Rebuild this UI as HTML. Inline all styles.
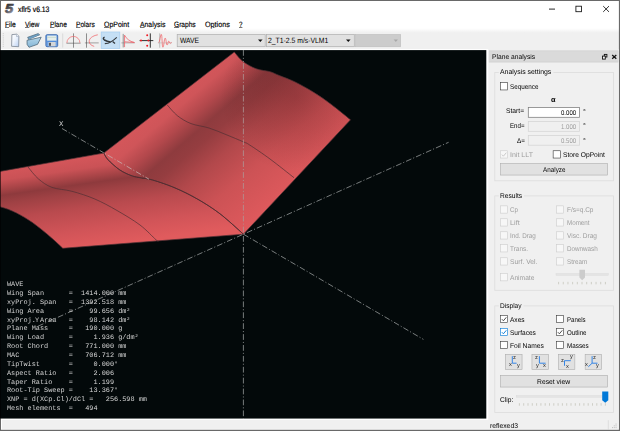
<!DOCTYPE html>
<html lang="en">
<head>
<meta charset="utf-8">
<title>xflr5 v6.13</title>
<style>
html,body{margin:0;padding:0;background:#fff;}
body{width:620px;height:431px;overflow:hidden;position:relative;font-family:"Liberation Sans",sans-serif;}
#win{position:absolute;left:0;top:0;width:620px;height:431px;overflow:hidden;background:#fff;}
svg{position:absolute;left:0;top:0;}
.t{position:absolute;white-space:pre;line-height:10px;height:10px;transform-origin:0 50%;transform:rotate(0.03deg);font-family:"Liberation Sans",sans-serif;}
.t u{text-decoration:underline;text-decoration-thickness:0.5px;text-underline-offset:0.4px;text-decoration-color:#777;}
.m{position:absolute;left:6.9px;margin:0;transform-origin:0 50%;transform:rotate(0.03deg);font-family:"Liberation Mono",monospace;font-size:6.87px;line-height:10px;height:10px;color:#d4d4d4;white-space:pre;}
#xl{position:absolute;left:58.6px;top:118.7px;font-family:"Liberation Mono",monospace;font-size:7.4px;line-height:10px;height:10px;color:#d0d0d0;transform-origin:0 50%;transform:rotate(0.03deg);}
#gl,#pt{position:absolute;left:0;top:0;width:620px;height:431px;filter:grayscale(1);}
#frame{position:absolute;left:0;top:0;width:620px;height:431px;pointer-events:none;}
</style>
</head>
<body>
<div id="win">
<svg id="view" width="620" height="431" viewBox="0 0 620 431">
<defs>
<clipPath id="vc"><rect x="0" y="50.10" width="486.55" height="368.65"/></clipPath>
<linearGradient id="gup" gradientUnits="userSpaceOnUse" x1="169.0" y1="102.0" x2="266.5" y2="216.0"><stop offset="0.000" stop-color="#d3565a"/><stop offset="0.070" stop-color="#cf5559"/><stop offset="0.170" stop-color="#b3484c"/><stop offset="0.270" stop-color="#8e3b3e"/><stop offset="0.350" stop-color="#953d40"/><stop offset="0.500" stop-color="#b2484b"/><stop offset="0.700" stop-color="#cc5255"/><stop offset="1.000" stop-color="#e05a5d"/></linearGradient>
<linearGradient id="glo" gradientUnits="userSpaceOnUse" x1="52.0" y1="162.0" x2="64.6" y2="251.1"><stop offset="0.000" stop-color="#d4565a"/><stop offset="0.120" stop-color="#ca5256"/><stop offset="0.220" stop-color="#a84447"/><stop offset="0.290" stop-color="#8e3a3d"/><stop offset="0.380" stop-color="#9f4144"/><stop offset="0.550" stop-color="#b94a4e"/><stop offset="0.800" stop-color="#d15458"/><stop offset="1.000" stop-color="#e05b5d"/></linearGradient>
<radialGradient id="gtip" gradientUnits="userSpaceOnUse" cx="296" cy="96" r="76"><stop offset="0" stop-color="#3a0a0e" stop-opacity="0.24"/><stop offset="0.5" stop-color="#3a0a0e" stop-opacity="0.13"/><stop offset="1" stop-color="#3a0a0e" stop-opacity="0"/></radialGradient>
</defs>
<g clip-path="url(#vc)">
<rect x="0" y="50.10" width="486.55" height="368.65" fill="#03090a"/>
<path d="M103.80,153.10 L234.30,52.00 C235.75,53.58 239.32,58.70 243.00,61.50 C246.68,64.30 251.90,67.10 256.40,68.80 C260.90,70.50 266.18,70.58 270.00,71.70 C273.82,72.82 275.13,73.80 279.30,75.50 C283.47,77.20 289.35,79.15 295.00,81.90 C300.65,84.65 307.15,88.25 313.20,92.00 C319.25,95.75 325.08,99.77 331.30,104.40 C337.52,109.03 347.30,117.23 350.50,119.80 L243.40,234.20 C239.50,230.80 227.62,219.63 220.00,213.80 C212.38,207.97 205.20,203.52 197.70,199.20 C190.20,194.88 182.52,191.10 175.00,187.90 C167.48,184.70 158.43,181.70 152.60,180.00 C146.77,178.30 143.60,178.45 140.00,177.70 C136.40,176.95 134.40,176.82 131.00,175.50 C127.60,174.18 123.43,172.43 119.60,169.80 C115.77,167.17 110.63,162.48 108.00,159.70 C105.37,156.92 104.50,154.20 103.80,153.10 Z" fill="url(#gup)"/>
<path d="M103.80,153.10 L234.30,52.00 C235.75,53.58 239.32,58.70 243.00,61.50 C246.68,64.30 251.90,67.10 256.40,68.80 C260.90,70.50 266.18,70.58 270.00,71.70 C273.82,72.82 275.13,73.80 279.30,75.50 C283.47,77.20 289.35,79.15 295.00,81.90 C300.65,84.65 307.15,88.25 313.20,92.00 C319.25,95.75 325.08,99.77 331.30,104.40 C337.52,109.03 347.30,117.23 350.50,119.80 L243.40,234.20 C239.50,230.80 227.62,219.63 220.00,213.80 C212.38,207.97 205.20,203.52 197.70,199.20 C190.20,194.88 182.52,191.10 175.00,187.90 C167.48,184.70 158.43,181.70 152.60,180.00 C146.77,178.30 143.60,178.45 140.00,177.70 C136.40,176.95 134.40,176.82 131.00,175.50 C127.60,174.18 123.43,172.43 119.60,169.80 C115.77,167.17 110.63,162.48 108.00,159.70 C105.37,156.92 104.50,154.20 103.80,153.10 Z" fill="url(#gtip)"/>
<path d="M103.80,153.10 L-9.00,173.00 L-9,204.4 L0,206.8 C22.5,212.4 43.2,229.6 62.8,248.3 L243.40,234.20 C239.50,230.80 227.62,219.63 220.00,213.80 C212.38,207.97 205.20,203.52 197.70,199.20 C190.20,194.88 182.52,191.10 175.00,187.90 C167.48,184.70 158.43,181.70 152.60,180.00 C146.77,178.30 143.60,178.45 140.00,177.70 C136.40,176.95 134.40,176.82 131.00,175.50 C127.60,174.18 123.43,172.43 119.60,169.80 C115.77,167.17 110.63,162.48 108.00,159.70 C105.37,156.92 104.50,154.20 103.80,153.10 Z" fill="url(#glo)"/>
<path d="M103.80,153.10 L234.30,52.00 C235.75,53.58 239.32,58.70 243.00,61.50 C246.68,64.30 251.90,67.10 256.40,68.80 C260.90,70.50 266.18,70.58 270.00,71.70 C273.82,72.82 275.13,73.80 279.30,75.50 C283.47,77.20 289.35,79.15 295.00,81.90 C300.65,84.65 307.15,88.25 313.20,92.00 C319.25,95.75 325.08,99.77 331.30,104.40 C337.52,109.03 347.30,117.23 350.50,119.80 L243.40,234.20 C239.50,230.80 227.62,219.63 220.00,213.80 C212.38,207.97 205.20,203.52 197.70,199.20 C190.20,194.88 182.52,191.10 175.00,187.90 C167.48,184.70 158.43,181.70 152.60,180.00 C146.77,178.30 143.60,178.45 140.00,177.70 C136.40,176.95 134.40,176.82 131.00,175.50 C127.60,174.18 123.43,172.43 119.60,169.80 C115.77,167.17 110.63,162.48 108.00,159.70 C105.37,156.92 104.50,154.20 103.80,153.10 Z" stroke="#502f33" stroke-width="0.7" fill="none"/>
<path d="M103.80,153.10 L-9.00,173.00 L-9,204.4 L0,206.8 C22.5,212.4 43.2,229.6 62.8,248.3 L243.40,234.20 C239.50,230.80 227.62,219.63 220.00,213.80 C212.38,207.97 205.20,203.52 197.70,199.20 C190.20,194.88 182.52,191.10 175.00,187.90 C167.48,184.70 158.43,181.70 152.60,180.00 C146.77,178.30 143.60,178.45 140.00,177.70 C136.40,176.95 134.40,176.82 131.00,175.50 C127.60,174.18 123.43,172.43 119.60,169.80 C115.77,167.17 110.63,162.48 108.00,159.70 C105.37,156.92 104.50,154.20 103.80,153.10 Z" stroke="#502f33" stroke-width="0.7" fill="none"/>
<path d="M167.20,104.90 C168.90,106.70 173.43,112.58 177.40,115.70 C181.37,118.82 185.73,121.55 191.00,123.60 C196.27,125.65 203.00,126.10 209.00,128.00 C215.00,129.90 221.33,132.72 227.00,135.00 C232.67,137.28 239.22,140.03 243.00,141.70 C246.78,143.37 245.20,142.12 249.70,145.00 C254.20,147.88 262.62,153.55 270.00,159.00 C277.38,164.45 290.00,174.58 294.00,177.70" stroke="#502f33" stroke-width="0.7" fill="none"/>
<path d="M28.00,167.00 C29.73,168.98 34.40,175.50 38.40,178.90 C42.40,182.30 46.40,185.33 52.00,187.40 C57.60,189.47 64.87,189.37 72.00,191.30 C79.13,193.23 87.30,195.80 94.80,199.00 C102.30,202.20 109.47,206.17 117.00,210.50 C124.53,214.83 133.50,220.12 140.00,225.00 C146.50,229.88 152.92,237.10 156.00,239.80 C159.08,242.50 158.08,240.97 158.50,241.20" stroke="#502f33" stroke-width="0.7" fill="none"/>
<line x1="62.0" y1="128.5" x2="103.8" y2="152.85" stroke="#969999" stroke-width="0.8" stroke-dasharray="5.8 2.0 1.1 2.0" fill="none"/>
<line x1="103.8" y1="152.85" x2="149.0" y2="179.2" stroke="#c6aeae" stroke-width="0.8" stroke-dasharray="5.8 2.0 1.1 2.0" fill="none" stroke-dashoffset="-4.6"/>
<line x1="243.4" y1="234.2" x2="423.4" y2="339.4" stroke="#969999" stroke-width="0.8" stroke-dasharray="5.8 2.0 1.1 2.0" fill="none"/>
<line x1="38" y1="326.2" x2="448.6" y2="142.3" stroke="#969999" stroke-width="0.8" stroke-dasharray="5.8 2.0 1.1 2.0" fill="none"/>
<line x1="243.4" y1="50" x2="243.4" y2="62.0" stroke="#969999" stroke-width="0.8" stroke-dasharray="5.8 2.0 1.1 2.0" fill="none"/>
<line x1="243.4" y1="62.0" x2="243.4" y2="234.2" stroke="#ae9595" stroke-width="0.8" stroke-dasharray="5.8 2.0 1.1 2.0" fill="none" stroke-dashoffset="-1.1"/>
<line x1="243.4" y1="234.2" x2="243.4" y2="419" stroke="#969999" stroke-width="0.8" stroke-dasharray="5.8 2.0 1.1 2.0" fill="none" stroke-dashoffset="-1.8"/>
</g>
</svg>
<div id="gl">
<span class="m" style="top:279.25px">WAVE</span>
<span class="m" style="top:288.09px">Wing Span      =  1414.000 mm</span>
<span class="m" style="top:296.94px">xyProj. Span   =  1392.518 mm</span>
<span class="m" style="top:305.78px">Wing Area      =    99.656 dm²</span>
<span class="m" style="top:314.62px">xyProj. Area   =    98.142 dm²</span>
<span class="m" style="top:323.47px">Plane Mass     =   190.000 g</span>
<span class="m" style="top:332.31px">Wing Load      =     1.936 g/dm²</span>
<span class="m" style="top:341.15px">Root Chord     =   771.000 mm</span>
<span class="m" style="top:349.99px">MAC            =   706.712 mm</span>
<span class="m" style="top:358.84px">TipTwist       =     0.000°</span>
<span class="m" style="top:367.68px">Aspect Ratio   =     2.006</span>
<span class="m" style="top:376.52px">Taper Ratio    =     1.199</span>
<span class="m" style="top:385.37px">Root-Tip Sweep =    13.367°</span>
<span class="m" style="top:394.21px">XNP = d(XCp.Cl)/dCl =   256.598 mm</span>
<span class="m" style="top:403.05px">Mesh elements  =   494</span>
<span class="m" style="top:314.60px;left:35.3px;color:#c4c4c4">Y</span>
<span id="xl">X</span>
</div>
<svg id="ui" width="620" height="431" viewBox="0 0 620 431">
<defs>
<linearGradient id="gdoc" x1="0" y1="0" x2="1" y2="1"><stop offset="0" stop-color="#ffffff"/><stop offset="0.45" stop-color="#eef4fd"/><stop offset="1" stop-color="#b9d0f2"/></linearGradient>
<linearGradient id="gfold" x1="0" y1="0" x2="0" y2="1"><stop offset="0" stop-color="#b4d6ea"/><stop offset="1" stop-color="#86b6d6"/></linearGradient>
<linearGradient id="gsave" x1="0" y1="0" x2="0" y2="1"><stop offset="0" stop-color="#5a8fd0"/><stop offset="1" stop-color="#2f68b4"/></linearGradient>
<linearGradient id="glogo" gradientUnits="userSpaceOnUse" x1="6" y1="4" x2="14" y2="13.5"><stop offset="0" stop-color="#2a2a2a"/><stop offset="0.5" stop-color="#5a5a62"/><stop offset="1" stop-color="#b4b4c8"/></linearGradient>
<linearGradient id="gtb" gradientUnits="userSpaceOnUse" x1="0" y1="28.2" x2="0" y2="32.8"><stop offset="0" stop-color="#ffffff"/><stop offset="1" stop-color="#f0f0f0"/></linearGradient>
</defs>
<rect x="1.00" y="28.00" width="617.90" height="5.00" fill="url(#gtb)"/>
<rect x="1.00" y="32.90" width="617.90" height="16.20" fill="#f0f0f0"/>
<rect x="2.00" y="420.00" width="616.00" height="8.90" fill="#f0f0f0"/>
<rect x="488.25" y="49.00" width="129.95" height="371.00" fill="#f0f0f0"/>
<rect x="488.90" y="50.40" width="129.30" height="12.10" fill="#d2d2d2"/>
<rect x="488.90" y="51.30" width="129.30" height="10.30" fill="#dadada"/>
<text x="5.1" y="13.5" font-family="Liberation Sans, sans-serif" font-size="13.2" font-weight="bold" font-style="italic" fill="url(#glogo)" stroke="url(#glogo)" stroke-width="0.7" stroke-linejoin="round" transform="translate(5.1 0) scale(1.13 1) translate(-5.1 0)">5</text>
<line x1="549.00" y1="9.10" x2="555.00" y2="9.10" stroke="#111" stroke-width="0.90"/>
<rect x="575.90" y="6.20" width="5.60" height="5.50" fill="none" stroke="#111" stroke-width="0.85"/>
<path d="M603.2,6.1 L609,11.9 M609,6.1 L603.2,11.9" fill="none" stroke="#111" stroke-width="0.85"/>
<rect x="2.80" y="33.30" width="0.80" height="0.80" fill="#b8b8b8"/>
<rect x="2.80" y="35.40" width="0.80" height="0.80" fill="#b8b8b8"/>
<rect x="2.80" y="37.50" width="0.80" height="0.80" fill="#b8b8b8"/>
<rect x="2.80" y="39.60" width="0.80" height="0.80" fill="#b8b8b8"/>
<rect x="2.80" y="41.70" width="0.80" height="0.80" fill="#b8b8b8"/>
<rect x="2.80" y="43.80" width="0.80" height="0.80" fill="#b8b8b8"/>
<rect x="2.80" y="45.90" width="0.80" height="0.80" fill="#b8b8b8"/>
<path d="M11.9,34.6 L16.7,34.2 L18.9,36.2 L18.7,46.7 L11.6,46.3 Z" fill="url(#gdoc)" stroke="#75808e" stroke-width="0.75"/>
<path d="M16.5,34.4 L16.5,36.6 L18.8,36.4" fill="#f4f8fd" stroke="#8a98ac" stroke-width="0.50"/>
<path d="M27.6,37.3 L38.3,33.5 L39.7,35.0 L29.0,40.0 Z" fill="#6fa0c4" stroke="#425a6c" stroke-width="0.60"/>
<path d="M28.8,39.8 L39.3,35.5 L40.1,36.6 L29.8,41.5 Z" fill="#ffffff"/>
<path d="M27.0,40.3 L41.2,37.2 L37.6,44.3 L29.0,47.3 L27.1,44.4 Z" fill="url(#gfold)" stroke="#425a6c" stroke-width="0.70"/>
<rect x="45.90" y="34.70" width="11.80" height="12.00" fill="#6ea2e4" stroke="#3a68ae" stroke-width="0.90" rx="1.20"/>
<rect x="47.20" y="35.60" width="9.20" height="5.20" fill="#e6eeea"/>
<rect x="47.20" y="36.90" width="9.20" height="0.80" fill="#c2d8cc"/>
<rect x="47.20" y="40.80" width="9.20" height="0.90" fill="#4a86d8"/>
<rect x="48.60" y="42.00" width="7.00" height="4.30" fill="#d4d6d8"/>
<rect x="49.10" y="42.80" width="1.80" height="3.00" fill="#454a52"/>
<line x1="62.70" y1="33.50" x2="62.70" y2="47.50" stroke="#d0d0d0" stroke-width="0.70"/>
<line x1="66.40" y1="43.20" x2="80.60" y2="43.20" stroke="#8a8a8a" stroke-width="0.90"/>
<line x1="73.50" y1="33.40" x2="73.50" y2="47.70" stroke="#4a4a4a" stroke-width="0.60"/>
<path d="M66.9,42.9 A6.5,6.5 0 0 1 79.9,42.9" fill="none" stroke="#f0686c" stroke-width="0.70"/>
<line x1="84.90" y1="42.90" x2="98.70" y2="42.90" stroke="#8a8a8a" stroke-width="0.80"/>
<line x1="86.50" y1="33.40" x2="86.50" y2="47.70" stroke="#4a4a4a" stroke-width="0.60"/>
<path d="M97.8,34.8 C92.2,35.8 89.2,38.6 89.2,41.3 C89.2,43.8 91.0,45.4 94.2,46.4" fill="none" stroke="#f0585c" stroke-width="0.70"/>
<rect x="101.20" y="32.00" width="18.60" height="16.60" fill="#c5dff5" stroke="#a5cdf1" stroke-width="0.70"/>
<path d="M104.6,37.2 C103.0,37.6 102.9,39.0 104.4,40.0 C106.2,41.1 108.6,41.7 110.6,41.9" fill="none" stroke="#33383d" stroke-width="1.50"/>
<path d="M110.6,41.9 C112.6,40.8 114.8,39.2 116.8,37.3" fill="none" stroke="#33383d" stroke-width="1.10"/>
<path d="M104.8,43.7 C107.0,43.5 109.0,42.9 110.6,41.9" fill="none" stroke="#3c4146" stroke-width="1.20"/>
<path d="M112.6,41.6 L115.0,43.6" fill="none" stroke="#33383d" stroke-width="1.30"/>
<line x1="121.30" y1="42.90" x2="134.80" y2="42.90" stroke="#9a9a9a" stroke-width="0.70"/>
<line x1="123.20" y1="33.90" x2="123.20" y2="47.40" stroke="#6a6a6a" stroke-width="0.70"/>
<path d="M124.55,47.1 L124.55,35.2 C126.2,38.6 129.6,41.4 134.4,42.5 C131.2,42.3 128.0,42.0 124.8,41.8" fill="none" stroke="#ee5c64" stroke-width="0.75"/>
<line x1="139.60" y1="40.60" x2="153.30" y2="40.60" stroke="#1c1c1c" stroke-width="0.90"/>
<line x1="150.30" y1="33.40" x2="150.30" y2="47.70" stroke="#1c1c1c" stroke-width="0.90"/>
<circle cx="147.2" cy="35.2" r="1.0" fill="#f01c24"/>
<circle cx="147.2" cy="45.7" r="1.0" fill="#f01c24"/>
<circle cx="141.0" cy="40.6" r="1.0" fill="#f01c24"/>
<circle cx="148.4" cy="40.6" r="1.0" fill="#f01c24"/>
<line x1="157.90" y1="42.90" x2="172.00" y2="42.90" stroke="#b8b8b8" stroke-width="0.60"/>
<line x1="159.70" y1="33.40" x2="159.70" y2="47.70" stroke="#9a9a9a" stroke-width="0.60"/>
<path d="M158.6,42.6 C159.8,42.6 160.3,34.4 161.3,34.4 C162.3,34.4 161.9,47.2 162.9,47.2 C163.9,47.2 164.2,38.1 165.2,38.1 C166.2,38.1 166.1,45.0 167.1,45.0 C168.1,45.0 167.9,41.2 168.7,41.2 C169.5,41.2 169.6,43.4 170.2,43.4 C170.8,43.4 170.9,42.4 171.6,42.4" fill="none" stroke="#f0585c" stroke-width="0.70"/>
<rect x="177.20" y="34.60" width="88.00" height="12.10" fill="#e1e1e1" stroke="#adadad" stroke-width="0.70"/>
<path d="M258.0,39.5 L262.6,39.5 L260.3,42.1 Z" fill="#111"/>
<rect x="266.40" y="34.60" width="87.90" height="12.10" fill="#e1e1e1" stroke="#adadad" stroke-width="0.70"/>
<path d="M346.0,39.5 L350.6,39.5 L348.3,42.1 Z" fill="#111"/>
<rect x="355.50" y="34.60" width="45.10" height="12.10" fill="#cccccc" stroke="#bfbfbf" stroke-width="0.70"/>
<path d="M393.7,39.6 L397.9,39.6 L395.8,41.9 Z" fill="#a8a8a8"/>
<rect x="604.30" y="54.40" width="2.60" height="2.60" fill="#dadada" stroke="#111" stroke-width="0.90"/>
<rect x="602.50" y="56.10" width="2.80" height="3.00" fill="#f4f4f4" stroke="#111" stroke-width="0.90"/>
<path d="M612.2,55.0 L616.3,58.8 M616.3,55.0 L612.2,58.8" fill="none" stroke="#111" stroke-width="1.25"/>
<rect x="494.80" y="72.40" width="118.80" height="108.40" fill="none" stroke="#dcdcdc" stroke-width="0.80"/>
<rect x="498.80" y="70.40" width="54.60" height="4.00" fill="#f0f0f0"/>
<rect x="494.80" y="195.90" width="118.80" height="94.40" fill="none" stroke="#dcdcdc" stroke-width="0.80"/>
<rect x="498.80" y="193.90" width="25.20" height="4.00" fill="#f0f0f0"/>
<rect x="494.80" y="305.90" width="118.80" height="106.60" fill="none" stroke="#dcdcdc" stroke-width="0.80"/>
<rect x="498.80" y="303.90" width="24.70" height="4.00" fill="#f0f0f0"/>
<rect x="500.35" y="82.65" width="7.30" height="7.30" fill="#ffffff" stroke="#3a3a3a" stroke-width="0.62"/>
<rect x="528.30" y="107.50" width="51.30" height="9.80" fill="#ffffff" stroke="#7a7a7a" stroke-width="0.75"/>
<rect x="528.30" y="121.50" width="51.30" height="9.80" fill="#f0f0f0" stroke="#d4d4d4" stroke-width="0.75"/>
<rect x="528.30" y="135.40" width="51.30" height="9.80" fill="#f0f0f0" stroke="#d4d4d4" stroke-width="0.75"/>
<rect x="500.35" y="150.75" width="7.30" height="7.30" fill="#f7f7f7" stroke="#cdcdcd" stroke-width="0.62"/>
<path d="M501.90,154.60 L503.40,156.20 L506.30,152.70" fill="none" stroke="#c4c4c4" stroke-width="0.90"/>
<rect x="553.15" y="150.75" width="7.30" height="7.30" fill="#ffffff" stroke="#3a3a3a" stroke-width="0.62"/>
<rect x="500.65" y="163.55" width="106.80" height="11.50" fill="#e1e1e1" stroke="#adadad" stroke-width="0.60"/>
<rect x="500.35" y="205.85" width="7.30" height="7.30" fill="#f7f7f7" stroke="#cdcdcd" stroke-width="0.62"/>
<rect x="556.35" y="205.85" width="7.30" height="7.30" fill="#f7f7f7" stroke="#cdcdcd" stroke-width="0.62"/>
<rect x="500.35" y="218.75" width="7.30" height="7.30" fill="#f7f7f7" stroke="#cdcdcd" stroke-width="0.62"/>
<rect x="556.35" y="218.75" width="7.30" height="7.30" fill="#f7f7f7" stroke="#cdcdcd" stroke-width="0.62"/>
<rect x="500.35" y="231.75" width="7.30" height="7.30" fill="#f7f7f7" stroke="#cdcdcd" stroke-width="0.62"/>
<rect x="556.35" y="231.75" width="7.30" height="7.30" fill="#f7f7f7" stroke="#cdcdcd" stroke-width="0.62"/>
<rect x="500.35" y="244.65" width="7.30" height="7.30" fill="#f7f7f7" stroke="#cdcdcd" stroke-width="0.62"/>
<rect x="556.35" y="244.65" width="7.30" height="7.30" fill="#f7f7f7" stroke="#cdcdcd" stroke-width="0.62"/>
<rect x="500.35" y="257.75" width="7.30" height="7.30" fill="#f7f7f7" stroke="#cdcdcd" stroke-width="0.62"/>
<rect x="556.35" y="257.75" width="7.30" height="7.30" fill="#f7f7f7" stroke="#cdcdcd" stroke-width="0.62"/>
<rect x="500.35" y="273.55" width="7.30" height="7.30" fill="#f7f7f7" stroke="#cdcdcd" stroke-width="0.62"/>
<rect x="556.00" y="273.70" width="52.20" height="1.60" fill="#e4e4e4" stroke="#d8d8d8" stroke-width="0.40"/>
<path d="M579.4,269.8 L585.0,269.8 L585.0,277.6 L582.2,280.2 L579.4,277.6 Z" fill="#cccccc"/>
<line x1="558.60" y1="281.90" x2="558.60" y2="284.30" stroke="#c0c0b4" stroke-width="0.70"/>
<line x1="563.28" y1="281.90" x2="563.28" y2="284.30" stroke="#c0c0b4" stroke-width="0.70"/>
<line x1="567.96" y1="281.90" x2="567.96" y2="284.30" stroke="#c0c0b4" stroke-width="0.70"/>
<line x1="572.64" y1="281.90" x2="572.64" y2="284.30" stroke="#c0c0b4" stroke-width="0.70"/>
<line x1="577.32" y1="281.90" x2="577.32" y2="284.30" stroke="#c0c0b4" stroke-width="0.70"/>
<line x1="582.00" y1="281.90" x2="582.00" y2="284.30" stroke="#c0c0b4" stroke-width="0.70"/>
<line x1="586.68" y1="281.90" x2="586.68" y2="284.30" stroke="#c0c0b4" stroke-width="0.70"/>
<line x1="591.36" y1="281.90" x2="591.36" y2="284.30" stroke="#c0c0b4" stroke-width="0.70"/>
<line x1="596.04" y1="281.90" x2="596.04" y2="284.30" stroke="#c0c0b4" stroke-width="0.70"/>
<line x1="600.72" y1="281.90" x2="600.72" y2="284.30" stroke="#c0c0b4" stroke-width="0.70"/>
<line x1="605.40" y1="281.90" x2="605.40" y2="284.30" stroke="#c0c0b4" stroke-width="0.70"/>
<rect x="500.35" y="315.35" width="7.30" height="7.30" fill="#ffffff" stroke="#3a3a3a" stroke-width="0.62"/>
<path d="M501.90,319.20 L503.40,320.80 L506.30,317.30" fill="none" stroke="#3a3a3a" stroke-width="0.90"/>
<rect x="556.35" y="315.35" width="7.30" height="7.30" fill="#ffffff" stroke="#3a3a3a" stroke-width="0.62"/>
<rect x="500.35" y="328.35" width="7.30" height="7.30" fill="#ffffff" stroke="#0078d7" stroke-width="0.62"/>
<path d="M501.90,332.20 L503.40,333.80 L506.30,330.30" fill="none" stroke="#0078d7" stroke-width="0.90"/>
<rect x="556.35" y="328.35" width="7.30" height="7.30" fill="#ffffff" stroke="#3a3a3a" stroke-width="0.62"/>
<path d="M557.90,332.20 L559.40,333.80 L562.30,330.30" fill="none" stroke="#3a3a3a" stroke-width="0.90"/>
<rect x="500.35" y="341.35" width="7.30" height="7.30" fill="#ffffff" stroke="#3a3a3a" stroke-width="0.62"/>
<rect x="556.35" y="341.35" width="7.30" height="7.30" fill="#ffffff" stroke="#3a3a3a" stroke-width="0.62"/>
<rect x="505.35" y="354.35" width="16.70" height="15.20" fill="#e1e1e1" stroke="#adadad" stroke-width="0.60"/>
<path d="M512.3,356.2 L512.3,363.2 L516.6,363.2" fill="none" stroke="#2a80e6" stroke-width="0.95"/>
<rect x="531.95" y="354.35" width="16.60" height="15.20" fill="#e1e1e1" stroke="#adadad" stroke-width="0.60"/>
<path d="M539.4,356.2 L539.4,363.2 L545.6,363.2" fill="none" stroke="#2a80e6" stroke-width="0.95"/>
<rect x="558.65" y="354.35" width="16.20" height="15.20" fill="#e1e1e1" stroke="#adadad" stroke-width="0.60"/>
<path d="M570.8,360.7 L564.5,360.7 L564.5,365.8" fill="none" stroke="#2a80e6" stroke-width="0.95"/>
<rect x="585.15" y="354.35" width="16.40" height="15.20" fill="#e1e1e1" stroke="#adadad" stroke-width="0.60"/>
<path d="M592.1,356.2 L592.1,363.2 L597.5,363.2 M592.1,363.2 L588.3,366.8" fill="none" stroke="#2a80e6" stroke-width="0.95"/>
<rect x="500.65" y="375.35" width="106.80" height="11.70" fill="#e1e1e1" stroke="#adadad" stroke-width="0.60"/>
<rect x="516.20" y="395.60" width="91.80" height="1.60" fill="#e4e4e4" stroke="#d6d6d6" stroke-width="0.40"/>
<path d="M602.2,391.6 L608.3,391.6 L608.3,400.2 L605.25,402.8 L602.2,400.2 Z" fill="#0078d7"/>
<line x1="519.40" y1="403.20" x2="519.40" y2="405.70" stroke="#c0c0b4" stroke-width="0.70"/>
<line x1="523.70" y1="403.20" x2="523.70" y2="405.70" stroke="#c0c0b4" stroke-width="0.70"/>
<line x1="528.00" y1="403.20" x2="528.00" y2="405.70" stroke="#c0c0b4" stroke-width="0.70"/>
<line x1="532.30" y1="403.20" x2="532.30" y2="405.70" stroke="#c0c0b4" stroke-width="0.70"/>
<line x1="536.60" y1="403.20" x2="536.60" y2="405.70" stroke="#c0c0b4" stroke-width="0.70"/>
<line x1="540.90" y1="403.20" x2="540.90" y2="405.70" stroke="#c0c0b4" stroke-width="0.70"/>
<line x1="545.20" y1="403.20" x2="545.20" y2="405.70" stroke="#c0c0b4" stroke-width="0.70"/>
<line x1="549.50" y1="403.20" x2="549.50" y2="405.70" stroke="#c0c0b4" stroke-width="0.70"/>
<line x1="553.80" y1="403.20" x2="553.80" y2="405.70" stroke="#c0c0b4" stroke-width="0.70"/>
<line x1="558.10" y1="403.20" x2="558.10" y2="405.70" stroke="#c0c0b4" stroke-width="0.70"/>
<line x1="562.40" y1="403.20" x2="562.40" y2="405.70" stroke="#c0c0b4" stroke-width="0.70"/>
<line x1="566.70" y1="403.20" x2="566.70" y2="405.70" stroke="#c0c0b4" stroke-width="0.70"/>
<line x1="571.00" y1="403.20" x2="571.00" y2="405.70" stroke="#c0c0b4" stroke-width="0.70"/>
<line x1="575.30" y1="403.20" x2="575.30" y2="405.70" stroke="#c0c0b4" stroke-width="0.70"/>
<line x1="579.60" y1="403.20" x2="579.60" y2="405.70" stroke="#c0c0b4" stroke-width="0.70"/>
<line x1="583.90" y1="403.20" x2="583.90" y2="405.70" stroke="#c0c0b4" stroke-width="0.70"/>
<line x1="588.20" y1="403.20" x2="588.20" y2="405.70" stroke="#c0c0b4" stroke-width="0.70"/>
<line x1="592.50" y1="403.20" x2="592.50" y2="405.70" stroke="#c0c0b4" stroke-width="0.70"/>
<line x1="596.80" y1="403.20" x2="596.80" y2="405.70" stroke="#c0c0b4" stroke-width="0.70"/>
<line x1="601.10" y1="403.20" x2="601.10" y2="405.70" stroke="#c0c0b4" stroke-width="0.70"/>
<line x1="605.40" y1="403.20" x2="605.40" y2="405.70" stroke="#c0c0b4" stroke-width="0.70"/>
<line x1="608.30" y1="420.20" x2="608.30" y2="429.20" stroke="#d0d0d0" stroke-width="0.60"/>
<rect x="615.60" y="427.20" width="0.90" height="0.90" fill="#b4b4b4"/>
<rect x="613.80" y="427.20" width="0.90" height="0.90" fill="#b4b4b4"/>
<rect x="612.00" y="427.20" width="0.90" height="0.90" fill="#b4b4b4"/>
<rect x="615.60" y="425.40" width="0.90" height="0.90" fill="#b4b4b4"/>
<rect x="613.80" y="425.40" width="0.90" height="0.90" fill="#b4b4b4"/>
<rect x="615.60" y="423.60" width="0.90" height="0.90" fill="#b4b4b4"/>
</svg>
<span class="t" style="left:17.60px;top:5.00px;font-size:8.00px;color:#000;transform:rotate(0.03deg) scaleX(0.8508);-webkit-text-stroke:0.2px #000;">xflr5 v6.13</span>
<span class="t" style="left:5.20px;top:20.00px;font-size:7.70px;color:#000;transform:rotate(0.03deg) scaleX(0.8705);-webkit-text-stroke:0.15px #000;"><u>F</u>ile</span>
<span class="t" style="left:25.30px;top:20.00px;font-size:7.70px;color:#000;transform:rotate(0.03deg) scaleX(0.8640);-webkit-text-stroke:0.15px #000;"><u>V</u>iew</span>
<span class="t" style="left:49.70px;top:20.00px;font-size:7.70px;color:#000;transform:rotate(0.03deg) scaleX(0.8531);-webkit-text-stroke:0.15px #000;"><u>P</u>lane</span>
<span class="t" style="left:75.80px;top:20.00px;font-size:7.70px;color:#000;transform:rotate(0.03deg) scaleX(0.8568);-webkit-text-stroke:0.15px #000;"><u>P</u>olars</span>
<span class="t" style="left:104.30px;top:20.00px;font-size:7.70px;color:#000;transform:rotate(0.03deg) scaleX(0.9022);-webkit-text-stroke:0.15px #000;"><u>O</u>pPoint</span>
<span class="t" style="left:139.50px;top:20.00px;font-size:7.70px;color:#000;transform:rotate(0.03deg) scaleX(0.8894);-webkit-text-stroke:0.15px #000;"><u>A</u>nalysis</span>
<span class="t" style="left:174.00px;top:20.00px;font-size:7.70px;color:#000;transform:rotate(0.03deg) scaleX(0.8594);-webkit-text-stroke:0.15px #000;"><u>G</u>raphs</span>
<span class="t" style="left:205.20px;top:20.00px;font-size:7.70px;color:#000;transform:rotate(0.03deg) scaleX(0.9346);-webkit-text-stroke:0.15px #000;">O<u>p</u>tions</span>
<span class="t" style="left:239.30px;top:20.00px;font-size:7.70px;color:#000;transform:rotate(0.03deg) scaleX(0.7939);-webkit-text-stroke:0.15px #000;"><u>?</u></span>
<span class="t" style="left:179.50px;top:35.90px;font-size:7.60px;color:#000;transform:rotate(0.03deg) scaleX(0.8869);">WAVE</span>
<span class="t" style="left:268.30px;top:35.90px;font-size:7.60px;color:#000;transform:rotate(0.03deg) scaleX(0.8994);">2_T1-2.5 m/s-VLM1</span>
<div id="pt">
<span class="t" style="left:491.70px;top:52.40px;font-size:6.90px;color:#000;transform:rotate(0.03deg) scaleX(0.9709);">Plane analysis</span>
<span class="t" style="left:500.30px;top:67.30px;font-size:6.90px;color:#000;">Analysis settings</span>
<span class="t" style="left:500.30px;top:190.80px;font-size:6.90px;color:#000;transform:rotate(0.03deg) scaleX(0.9605);">Results</span>
<span class="t" style="left:500.30px;top:300.80px;font-size:6.90px;color:#000;transform:rotate(0.03deg) scaleX(0.9547);">Display</span>
<span class="t" style="left:510.00px;top:82.20px;font-size:6.90px;color:#000;transform:rotate(0.03deg) scaleX(0.9171);">Sequence</span>
<span class="t" style="left:551.33px;top:94.70px;font-size:7.40px;color:#000;font-weight:bold;">α</span>
<span class="t" style="left:506.40px;top:106.10px;font-size:6.90px;color:#000;transform:rotate(0.03deg) scaleX(0.9731);">Start=</span>
<span class="t" style="left:561.30px;top:108.30px;font-size:6.90px;color:#000;transform:rotate(0.03deg) scaleX(0.8745);">0.000</span>
<span class="t" style="left:583.00px;top:106.60px;font-size:7.00px;color:#000;">°</span>
<span class="t" style="left:510.00px;top:120.80px;font-size:6.90px;color:#000;transform:rotate(0.03deg) scaleX(0.8892);">End=</span>
<span class="t" style="left:561.30px;top:122.30px;font-size:6.90px;color:#9d9d9d;transform:rotate(0.03deg) scaleX(0.8745);">1.000</span>
<span class="t" style="left:583.00px;top:121.30px;font-size:7.00px;color:#000;">°</span>
<span class="t" style="left:516.60px;top:136.10px;font-size:6.90px;color:#000;transform:rotate(0.03deg) scaleX(0.9145);">Δ=</span>
<span class="t" style="left:561.30px;top:136.20px;font-size:6.90px;color:#9d9d9d;transform:rotate(0.03deg) scaleX(0.8745);">0.500</span>
<span class="t" style="left:583.00px;top:135.50px;font-size:7.00px;color:#000;">°</span>
<span class="t" style="left:510.00px;top:150.30px;font-size:6.90px;color:#9d9d9d;transform:rotate(0.03deg) scaleX(1.0223);">Init LLT</span>
<span class="t" style="left:562.80px;top:150.30px;font-size:6.90px;color:#000;transform:rotate(0.03deg) scaleX(0.9668);">Store OpPoint</span>
<span class="t" style="left:542.80px;top:165.20px;font-size:6.90px;color:#000;transform:rotate(0.03deg) scaleX(0.9166);">Analyze</span>
<span class="t" style="left:510.00px;top:205.40px;font-size:6.90px;color:#9d9d9d;transform:rotate(0.03deg) scaleX(0.8956);">Cp</span>
<span class="t" style="left:567.00px;top:205.40px;font-size:6.90px;color:#9d9d9d;transform:rotate(0.03deg) scaleX(0.9402);">F/s=q.Cp</span>
<span class="t" style="left:510.00px;top:218.30px;font-size:6.90px;color:#9d9d9d;transform:rotate(0.03deg) scaleX(1.0538);">Lift</span>
<span class="t" style="left:567.00px;top:218.30px;font-size:6.90px;color:#9d9d9d;transform:rotate(0.03deg) scaleX(0.9027);">Moment</span>
<span class="t" style="left:510.00px;top:231.30px;font-size:6.90px;color:#9d9d9d;transform:rotate(0.03deg) scaleX(0.9126);">Ind. Drag</span>
<span class="t" style="left:567.00px;top:231.30px;font-size:6.90px;color:#9d9d9d;transform:rotate(0.03deg) scaleX(0.9464);">Visc. Drag</span>
<span class="t" style="left:510.00px;top:244.20px;font-size:6.90px;color:#9d9d9d;transform:rotate(0.03deg) scaleX(0.9327);">Trans.</span>
<span class="t" style="left:567.00px;top:244.20px;font-size:6.90px;color:#9d9d9d;transform:rotate(0.03deg) scaleX(0.9126);">Downwash</span>
<span class="t" style="left:510.00px;top:257.30px;font-size:6.90px;color:#9d9d9d;transform:rotate(0.03deg) scaleX(0.9822);">Surf. Vel.</span>
<span class="t" style="left:567.00px;top:257.30px;font-size:6.90px;color:#9d9d9d;transform:rotate(0.03deg) scaleX(0.9083);">Stream</span>
<span class="t" style="left:510.00px;top:273.10px;font-size:6.90px;color:#9d9d9d;transform:rotate(0.03deg) scaleX(0.9639);">Animate</span>
<span class="t" style="left:510.00px;top:314.90px;font-size:6.90px;color:#000;transform:rotate(0.03deg) scaleX(0.9518);">Axes</span>
<span class="t" style="left:567.00px;top:314.90px;font-size:6.90px;color:#000;transform:rotate(0.03deg) scaleX(0.8816);">Panels</span>
<span class="t" style="left:510.00px;top:327.90px;font-size:6.90px;color:#000;transform:rotate(0.03deg) scaleX(0.9512);">Surfaces</span>
<span class="t" style="left:567.00px;top:327.90px;font-size:6.90px;color:#000;transform:rotate(0.03deg) scaleX(0.8919);">Outline</span>
<span class="t" style="left:510.00px;top:340.90px;font-size:6.90px;color:#000;transform:rotate(0.03deg) scaleX(0.9687);">Foil Names</span>
<span class="t" style="left:567.00px;top:340.90px;font-size:6.90px;color:#000;transform:rotate(0.03deg) scaleX(0.9170);">Masses</span>
<span class="t" style="left:513.18px;top:351.85px;font-size:5.70px;color:#2a2a2a;">z</span>
<span class="t" style="left:508.97px;top:358.85px;font-size:5.70px;color:#2a2a2a;">x</span>
<span class="t" style="left:516.78px;top:360.05px;font-size:5.70px;color:#2a2a2a;">y</span>
<span class="t" style="left:535.28px;top:351.85px;font-size:5.70px;color:#2a2a2a;">z</span>
<span class="t" style="left:535.88px;top:359.65px;font-size:5.70px;color:#2a2a2a;">y</span>
<span class="t" style="left:543.48px;top:360.05px;font-size:5.70px;color:#2a2a2a;">x</span>
<span class="t" style="left:560.58px;top:354.65px;font-size:5.70px;color:#2a2a2a;">z</span>
<span class="t" style="left:570.08px;top:351.45px;font-size:5.70px;color:#2a2a2a;">y</span>
<span class="t" style="left:565.88px;top:360.85px;font-size:5.70px;color:#2a2a2a;">x</span>
<span class="t" style="left:592.78px;top:351.85px;font-size:5.70px;color:#2a2a2a;">z</span>
<span class="t" style="left:585.38px;top:358.85px;font-size:5.70px;color:#2a2a2a;">x</span>
<span class="t" style="left:595.98px;top:360.05px;font-size:5.70px;color:#2a2a2a;">y</span>
<span class="t" style="left:537.45px;top:377.10px;font-size:6.90px;color:#000;transform:rotate(0.03deg) scaleX(0.9838);">Reset view</span>
<span class="t" style="left:499.90px;top:395.20px;font-size:6.90px;color:#000;transform:rotate(0.03deg) scaleX(0.9635);">Clip:</span>
<span class="t" style="left:490.00px;top:421.20px;font-size:6.90px;color:#000;transform:rotate(0.03deg) scaleX(0.9864);">reflexed3</span>
</div>
<svg id="frame" width="620" height="431" viewBox="0 0 620 431"><path d="M0,0 H620 V431 H0 Z M1,1 V429.8 H618.9 V1 Z" fill="#000" fill-opacity="0.59" fill-rule="evenodd"/></svg>
</div>
</body>
</html>
